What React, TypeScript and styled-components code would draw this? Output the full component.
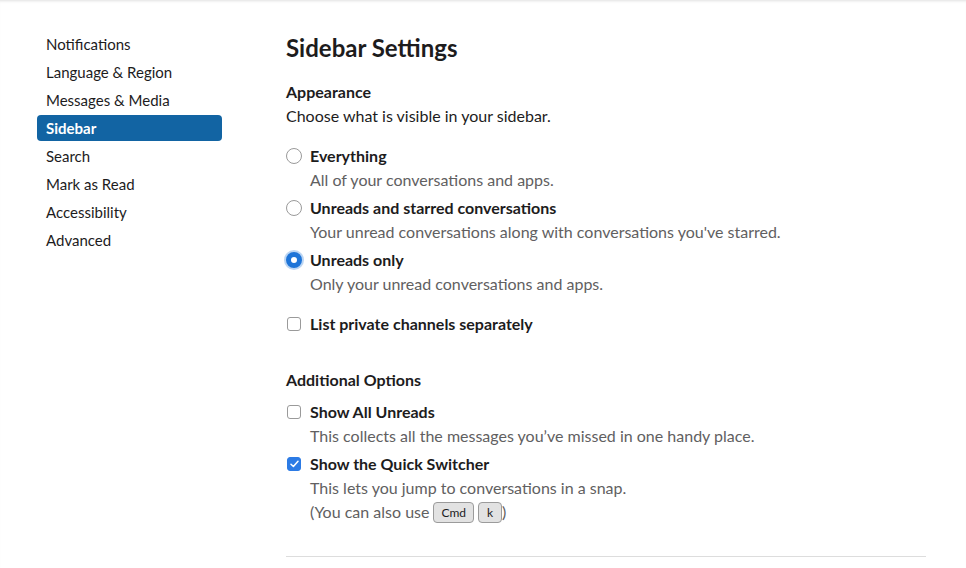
import React from "react";
import styled, { createGlobalStyle } from "styled-components";

const Global = createGlobalStyle`
  html, body { margin: 0; padding: 0; background: #fff; }
  body { font-family: Lato, "Open Sans", sans-serif; color: #1d1c1d; -webkit-font-smoothing: antialiased; }
  * { box-sizing: border-box; }
`;

const Page = styled.div`
  position: relative;
  width: 966px;
  height: 568px;
  overflow: hidden;
  display: flex;
  align-items: flex-start;
  background: #fff;
  box-shadow: inset 0 3px 3px -2px rgba(0, 0, 0, 0.12);
`;

const Nav = styled.nav`
  width: 185px;
  margin-left: 37px;
  margin-top: 31px;
  display: flex;
  flex-direction: column;
  gap: 2px;
`;

const NavItem = styled.div<{ $active?: boolean }>`
  height: 26px;
  line-height: 26px;
  padding: 0 9px;
  border-radius: 4px;
  font-size: 15px;
  font-weight: ${(p) => (p.$active ? 700 : 400)};
  color: ${(p) => (p.$active ? "#fff" : "#1d1c1d")};
  background: ${(p) => (p.$active ? "#1264a3" : "transparent")};
`;

const Main = styled.main`
  margin-left: 64px;
  margin-top: 32px;
  width: 640px;
  display: flex;
  flex-direction: column;
`;

const Title = styled.h1`
  margin: 0;
  font-size: 24px;
  line-height: 32px;
  font-weight: 700;
`;

const SectionTitle = styled.h2<{ $top: number }>`
  margin: ${(p) => p.$top}px 0 0;
  font-size: 16px;
  line-height: 24px;
  font-weight: 700;
`;

const Desc = styled.div`
  font-size: 16px;
  line-height: 24px;
  color: #1d1c1d;
`;

const OptionList = styled.div<{ $top: number }>`
  display: flex;
  flex-direction: column;
  gap: 4px;
  margin-top: ${(p) => p.$top}px;
`;

const Option = styled.div<{ $top?: number }>`
  display: grid;
  grid-template-columns: 24px 1fr;
  margin-top: ${(p) => p.$top ?? 0}px;
`;

const ControlCell = styled.div`
  height: 24px;
  display: flex;
  align-items: center;
`;

const Radio = styled.span<{ $checked?: boolean }>`
  width: 16px;
  height: 16px;
  border-radius: 50%;
  border: ${(p) => (p.$checked ? "5px solid #1d74d8" : "1px solid #9a9a9a")};
  background: #fff;
  box-shadow: ${(p) => (p.$checked ? "0 0 0 2px rgba(29,116,216,0.3)" : "none")};
`;

const Check = styled.span<{ $checked?: boolean }>`
  width: 14px;
  height: 14px;
  margin-left: 1px;
  border-radius: 3px;
  border: 1px solid ${(p) => (p.$checked ? "#2c7be5" : "#9a9a9a")};
  background: ${(p) => (p.$checked ? "#2c7be5" : "#fff")};
  display: flex;
  align-items: center;
  justify-content: center;
`;

const Label = styled.div`
  font-size: 16px;
  line-height: 24px;
  font-weight: 700;
  color: #1d1c1d;
`;

const Hint = styled.div`
  font-size: 16px;
  line-height: 24px;
  color: #616061;
`;

const Keys = styled.span`
  display: inline-flex;
  gap: 4px;
  margin-left: 4px;
  vertical-align: 1px;
`;

const Key = styled.span`
  display: inline-block;
  min-width: 24px;
  height: 21px;
  line-height: 19px;
  padding: 0 7px;
  text-align: center;
  font-size: 12px;
  color: #1d1c1d;
  background: #e2e2e2;
  border: 1px solid #9b9b9b;
  border-radius: 4px;
`;

const Divider = styled.hr`
  margin: 32px 0 0;
  border: 0;
  border-top: 1px solid #dddddd;
  width: 640px;
`;

const CheckMark = () => (
  <svg width="9" height="8" viewBox="0 0 9 8">
    <path d="M1 4.2 L3.4 6.5 L8 1.2" fill="none" stroke="#fff" strokeWidth="1.5" strokeLinecap="round" strokeLinejoin="round" />
  </svg>
);

const navItems = [
  "Notifications",
  "Language & Region",
  "Messages & Media",
  "Sidebar",
  "Search",
  "Mark as Read",
  "Accessibility",
  "Advanced",
];

export default function App() {
  return (
    <>
      <Global />
      <Page>
        <Nav>
          {navItems.map((n) => (
            <NavItem key={n} $active={n === "Sidebar"}>
              {n}
            </NavItem>
          ))}
        </Nav>
        <Main>
          <Title>Sidebar Settings</Title>
          <SectionTitle $top={16}>Appearance</SectionTitle>
          <Desc>Choose what is visible in your sidebar.</Desc>
          <OptionList $top={16}>
            <Option>
              <ControlCell><Radio /></ControlCell>
              <Label>Everything</Label>
              <span />
              <Hint>All of your conversations and apps.</Hint>
            </Option>
            <Option>
              <ControlCell><Radio /></ControlCell>
              <Label>Unreads and starred conversations</Label>
              <span />
              <Hint>Your unread conversations along with conversations you've starred.</Hint>
            </Option>
            <Option>
              <ControlCell><Radio $checked /></ControlCell>
              <Label>Unreads only</Label>
              <span />
              <Hint>Only your unread conversations and apps.</Hint>
            </Option>
            <Option $top={12}>
              <ControlCell><Check /></ControlCell>
              <Label>List private channels separately</Label>
            </Option>
          </OptionList>
          <SectionTitle $top={32}>Additional Options</SectionTitle>
          <OptionList $top={8}>
            <Option>
              <ControlCell><Check /></ControlCell>
              <Label>Show All Unreads</Label>
              <span />
              <Hint>This collects all the messages you’ve missed in one handy place.</Hint>
            </Option>
            <Option>
              <ControlCell><Check $checked><CheckMark /></Check></ControlCell>
              <Label>Show the Quick Switcher</Label>
              <span />
              <Hint>This lets you jump to conversations in a snap.</Hint>
              <span />
              <Hint>
                (You can also use
                <Keys>
                  <Key>Cmd</Key>
                  <Key>k</Key>
                </Keys>
                )
              </Hint>
            </Option>
          </OptionList>
          <Divider />
        </Main>
      </Page>
    </>
  );
}
